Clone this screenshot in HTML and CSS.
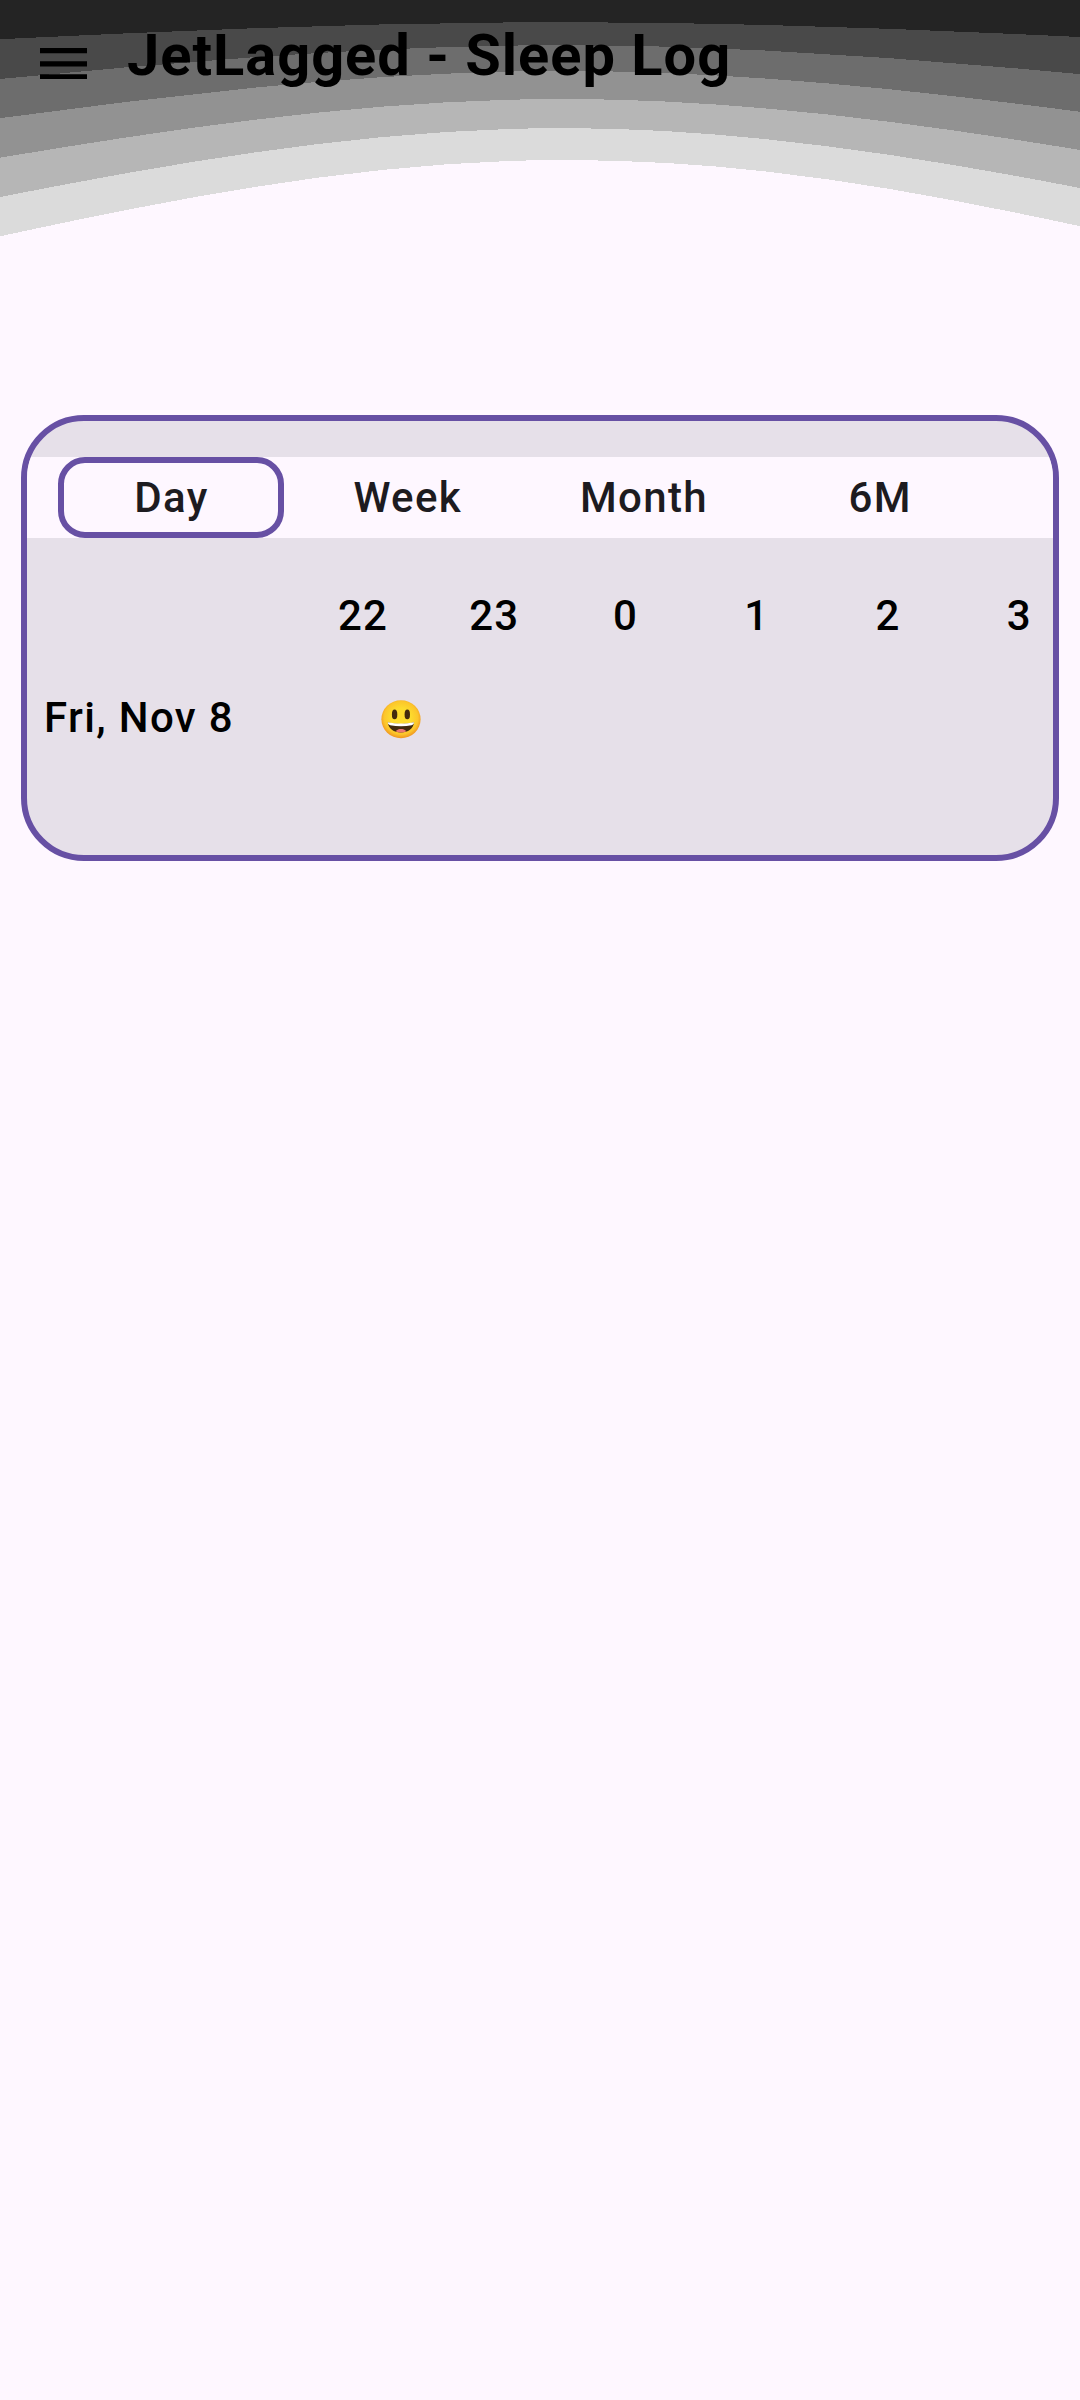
FILE: index.html
```html
<!DOCTYPE html>
<html lang="en">
<head>
<meta charset="utf-8">
<title>JetLagged - Sleep Log</title>
<link rel="stylesheet" href="styles.css">
</head>
<body>
<div class="screen">
  <svg class="waves" viewBox="0 0 1080 240" shape-rendering="crispEdges" aria-hidden="true">
    <path fill="#dbdbdb" d="M0 0V236.3C187.7 195.5 375.3 160 563 160S907.7 189.3 1080 226.2V0Z"/>
    <path fill="#b6b6b6" d="M0 0V197C187.7 160.1 375.3 128.1 563 128.1C735.3 128.1 907.7 154.6 1080 188V0Z"/>
    <path fill="#929292" d="M0 0V157.7C187.7 126.3 375.3 99 563 99C735.3 99 907.7 121.6 1080 150V0Z"/>
    <path fill="#6d6d6d" d="M0 0V118.2C187.7 92.9 375.3 71 563 71C735.3 71 907.7 89.1 1080 111.8V0Z"/>
    <path fill="#494949" d="M0 0V79C187.7 60.9 375.3 45.2 563 45.2C735.3 45.2 907.7 58 1080 74.2V0Z"/>
    <path fill="#242424" d="M0 0V39.2C187.7 30.1 375.3 22.2 563 22.2C735.3 22.2 907.7 28.8 1080 37V0Z"/>
  </svg>
  <header class="topbar">
    <svg class="menu" viewBox="3 6 18 12" aria-label="Menu"><path d="M3 18h18v-2H3v2zm0-5h18v-2H3v2zm0-7v2h18V6H3z"/></svg>
    <h1 class="title">JetLagged - Sleep Log</h1>
  </header>
  <main class="card">
    <nav class="tabs">
      <div class="tab tab-active">Day</div>
      <div class="tab">Week</div>
      <div class="tab">Month</div>
      <div class="tab">6M</div>
    </nav>
    <div class="hours">
      <span>22</span><span>23</span><span>0</span><span>1</span><span>2</span><span>3</span>
    </div>
    <div class="entry">
      <span class="date">Fri, Nov 8</span>
      <svg class="mood" viewBox="0 0 40 39" aria-label="Happy">
        <defs>
          <radialGradient id="face" cx="50%" cy="46%" r="54%">
            <stop offset="0.45" stop-color="#fddc2d"/>
            <stop offset="0.8" stop-color="#fcc62b"/>
            <stop offset="1" stop-color="#ef9420"/>
          </radialGradient>
        </defs>
        <ellipse cx="20" cy="19.3" rx="19.6" ry="19" fill="url(#face)"/>
        <ellipse cx="13.6" cy="14.4" rx="2.7" ry="4.9" fill="#422b0d"/>
        <ellipse cx="26.3" cy="14.4" rx="2.7" ry="4.9" fill="#422b0d"/>
        <path fill="#422b0d" d="M6.8 22.3C15 24.6 25 24.6 33 22.3C32.6 28.8 27 32.6 20 32.6S7.2 28.8 6.8 22.3Z"/>
        <path fill="#fff" d="M6.8 22.3C15 23.9 25 23.9 33 22.3C33 24 32 25 30.6 25.2C24 26.7 16 26.7 9.2 25.2C7.8 25 6.8 24 6.8 22.3Z"/>
        <path fill="#ed7770" d="M14.6 31.2C16 29.6 18 29 20 29S24 29.6 25.4 31.2C22 33 18 33 14.6 31.2Z"/>
      </svg>
    </div>
  </main>
</div>
</body>
</html>
```
FILE: styles.css
```css
* { box-sizing: border-box; }

body {
  margin: 0;
  background: #fef7ff;
  font-family: Roboto, sans-serif;
  color: #000;
}

.screen {
  position: relative;
  width: 1080px;
  height: 2400px;
  overflow: hidden;
}

/* Backdrop behind the top bar */
.waves {
  position: absolute;
  top: 0;
  left: 0;
  width: 1080px;
  height: 240px;
}

.topbar {
  position: relative;
  display: flex;
  align-items: flex-start;
  gap: 39.75px;
  height: 415px;
  padding: 21px 40px 0;
}

.menu {
  width: 47.25px;
  height: 31.5px;
  margin-top: 26.5px;
}

.title {
  margin: 0;
  font-size: 57.75px;
  font-weight: 680;
  line-height: 68px;
  letter-spacing: 1px;
  white-space: nowrap;
}

.card {
  height: 446px;
  margin: 0 21px;
  padding-top: 36px;
  overflow: hidden;
  border: 6px solid #6750a4;
  border-radius: 63px;
  background: #e6e0e9;
  font-size: 42px;
  font-weight: 550;
  letter-spacing: 1.35px;
  line-height: 60px;
}

.tabs {
  display: flex;
  gap: 10.25px;
  height: 81px;
  padding-left: 31px;
  background: #fef7ff;
  color: #1d1b20;
}

.tab {
  display: flex;
  align-items: center;
  justify-content: center;
  width: 226px;
  padding-left: 1px;
  border: 6px solid transparent;
  border-radius: 27px;
}

.tab-active { border-color: #6750a4; }

.hours {
  display: flex;
  margin-top: 48px;
  padding-left: 270.5px;
}

.hours span {
  flex: none;
  width: 131.25px;
  text-align: center;
}

.entry {
  display: flex;
  align-items: center;
  height: 60px;
  margin-top: 42px;
  padding-left: 17px;
}

.date { width: 337px; }

.mood {
  width: 40px;
  height: 39px;
  margin-top: 3px;
}
```
